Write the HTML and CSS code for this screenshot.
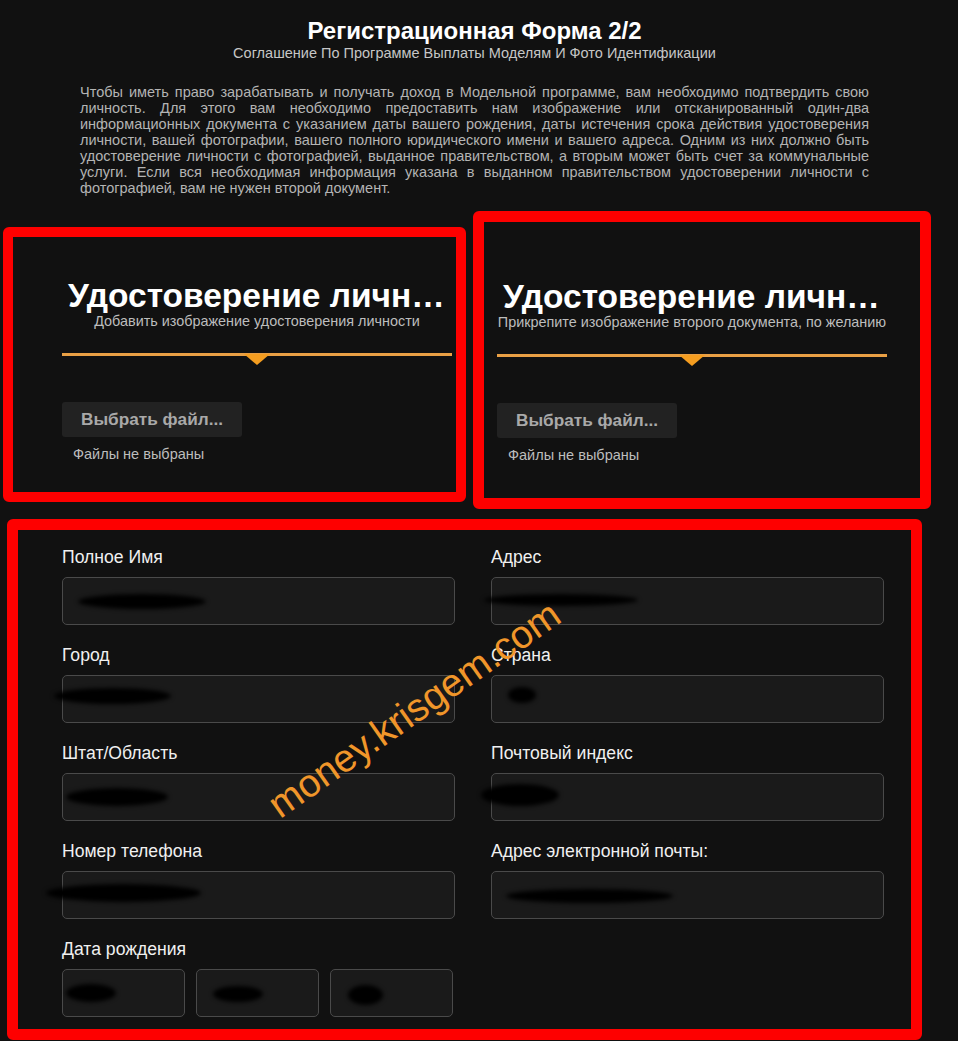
FILE: index.html
```html
<!DOCTYPE html>
<html lang="ru">
<head>
<meta charset="utf-8">
<title>Регистрационная Форма 2/2</title>
<link rel="stylesheet" href="styles.css">
</head>
<body>
<header class="intro">
  <h1 class="intro-title">Регистрационная Форма 2/2</h1>
  <p class="intro-sub">Соглашение По Программе Выплаты Моделям И Фото Идентификации</p>
  <p class="intro-text">Чтобы иметь право зарабатывать и получать доход в Модельной программе, вам необходимо подтвердить свою личность. Для этого вам необходимо предоставить нам изображение или отсканированный один-два информационных документа с указанием даты вашего рождения, даты истечения срока действия удостоверения личности, вашей фотографии, вашего полного юридического имени и вашего адреса. Одним из них должно быть удостоверение личности с фотографией, выданное правительством, а вторым может быть счет за коммунальные услуги. Если вся необходимая информация указана в выданном правительством удостоверении личности с фотографией, вам не нужен второй документ.</p>
</header>

<section class="uploads">
  <div class="card card-first">
    <div class="upload">
      <h2 class="upload-title">Удостоверение личности</h2>
      <p class="upload-sub">Добавить изображение удостоверения личности</p>
      <div class="divider"></div>
      <button class="file-btn" type="button">Выбрать файл...</button>
      <p class="file-status">Файлы не выбраны</p>
    </div>
  </div>
  <div class="card card-second">
    <div class="upload">
      <h2 class="upload-title">Удостоверение личности</h2>
      <p class="upload-sub">Прикрепите изображение второго документа, по желанию</p>
      <div class="divider"></div>
      <button class="file-btn" type="button">Выбрать файл...</button>
      <p class="file-status">Файлы не выбраны</p>
    </div>
  </div>
</section>

<section class="card card-form">
  <div class="form-grid">
    <div class="field">
      <label class="field-label">Полное Имя</label>
      <div class="input"><span class="blob" style="left:15px;top:16px;width:128px;height:15px"></span></div>
    </div>
    <div class="field">
      <label class="field-label">Адрес</label>
      <div class="input"><span class="blob" style="left:-8px;top:16px;width:154px;height:12px"></span></div>
    </div>
    <div class="field">
      <label class="field-label">Город</label>
      <div class="input"><span class="blob" style="left:-9px;top:12px;width:117px;height:16px"></span></div>
    </div>
    <div class="field">
      <label class="field-label">Страна</label>
      <div class="input"><span class="blob" style="left:16px;top:11px;width:28px;height:16px"></span></div>
    </div>
    <div class="field">
      <label class="field-label">Штат/Область</label>
      <div class="input"><span class="blob" style="left:3px;top:14px;width:102px;height:18px"></span></div>
    </div>
    <div class="field">
      <label class="field-label">Почтовый индекс</label>
      <div class="input"><span class="blob" style="left:-11px;top:10px;width:78px;height:22px"></span></div>
    </div>
    <div class="field">
      <label class="field-label">Номер телефона</label>
      <div class="input"><span class="blob" style="left:-17px;top:12px;width:155px;height:18px"></span></div>
    </div>
    <div class="field">
      <label class="field-label">Адрес электронной почты:</label>
      <div class="input"><span class="blob" style="left:14px;top:17px;width:167px;height:14px"></span></div>
    </div>
    <div class="field">
      <label class="field-label">Дата рождения</label>
      <div class="date-row">
        <div class="input"><span class="blob" style="left:3px;top:14px;width:50px;height:18px"></span></div>
        <div class="input"><span class="blob" style="left:16px;top:16px;width:50px;height:16px"></span></div>
        <div class="input"><span class="blob" style="left:17px;top:15px;width:35px;height:20px"></span></div>
      </div>
    </div>
  </div>
  <div class="watermark">money.krisgem.com</div>
</section>
</body>
</html>
```

FILE: styles.css
```css
* { box-sizing: border-box; }

body {
  margin: 0;
  background: #111111;
  font-family: "Liberation Sans", Arial, sans-serif;
  color: #eeeeee;
  height: 1041px;
  overflow: hidden;
}

/* header */
.intro {
  padding: 0 89px 0 80px;
  text-align: center;
}
.intro-title {
  margin: 18px 0 0;
  font-size: 24px;
  line-height: 26px;
  font-weight: bold;
  color: #ffffff;
}
.intro-sub {
  margin: 0;
  font-size: 14.5px;
  line-height: 18px;
  color: #c6c6c6;
}
.intro-text {
  margin: 22px 0 0;
  font-size: 14.5px;
  line-height: 16px;
  color: #b4b4b4;
  text-align: justify;
}

/* red annotated cards */
.card {
  border: 10px solid #fe0000;
  border-radius: 6px;
  background: #111111;
}

.uploads {
  display: flex;
  align-items: flex-start;
  margin-top: 15px;
}
.card-first {
  width: 463px;
  margin: 16px 0 0 3px;
  padding: 42px 0 29px 49px;
}
.card-second {
  width: 458px;
  margin-left: 7px;
  border-width: 11px;
  padding: 58px 0 34px 13px;
}

.upload {
  width: 390px;
}
.upload-title {
  margin: 0;
  padding: 0 6px;
  font-size: 33.5px;
  line-height: 34px;
  font-weight: bold;
  color: #ffffff;
  white-space: nowrap;
  overflow: hidden;
  text-overflow: ellipsis;
}
.upload-sub {
  margin: 0;
  font-size: 14.4px;
  line-height: 16px;
  color: #bdbdbd;
  text-align: center;
  white-space: nowrap;
}
.divider {
  position: relative;
  margin-top: 24px;
  height: 3px;
  background: #e9a045;
}
.divider::after {
  content: "";
  position: absolute;
  left: 50%;
  top: 1px;
  margin-left: -13px;
  border-left: 13px solid transparent;
  border-right: 13px solid transparent;
  border-top: 11px solid #f49d20;
}
.file-btn {
  display: block;
  margin-top: 46px;
  width: 180px;
  height: 35px;
  border: 0;
  border-radius: 3px;
  background: #222222;
  color: #a9a9a9;
  font-family: "Liberation Sans", Arial, sans-serif;
  font-size: 17.2px;
  font-weight: bold;
}
.file-status {
  margin: 8px 0 0;
  padding-left: 11px;
  font-size: 14.5px;
  line-height: 18px;
  color: #bdbdbd;
}

/* form */
.card-form {
  position: relative;
  width: 915px;
  margin: 10px 0 0 7px;
  border-width: 11px;
  padding: 17px 27px 12px 44px;
}
.form-grid {
  display: grid;
  grid-template-columns: 393px 393px;
  column-gap: 36px;
  row-gap: 20px;
}
.field-label {
  display: block;
  font-size: 17.6px;
  line-height: 20px;
  color: #f0f0f0;
  margin-bottom: 10px;
}
.input {
  position: relative;
  height: 48px;
  border: 1px solid #4a4a4a;
  border-radius: 5px;
  background: #1a1a1a;
}
.date-row {
  display: grid;
  grid-template-columns: repeat(3, 123px);
  column-gap: 11px;
}
.blob {
  position: absolute;
  background: #000000;
  border-radius: 50%;
  filter: blur(2px);
}

.watermark {
  position: absolute;
  left: 396px;
  top: 179px;
  transform: translate(-50%, -50%) rotate(-35deg);
  font-family: "Liberation Sans", Arial, sans-serif;
  font-size: 39px;
  line-height: 1;
  color: #f0962a;
  white-space: nowrap;
  pointer-events: none;
}
```
